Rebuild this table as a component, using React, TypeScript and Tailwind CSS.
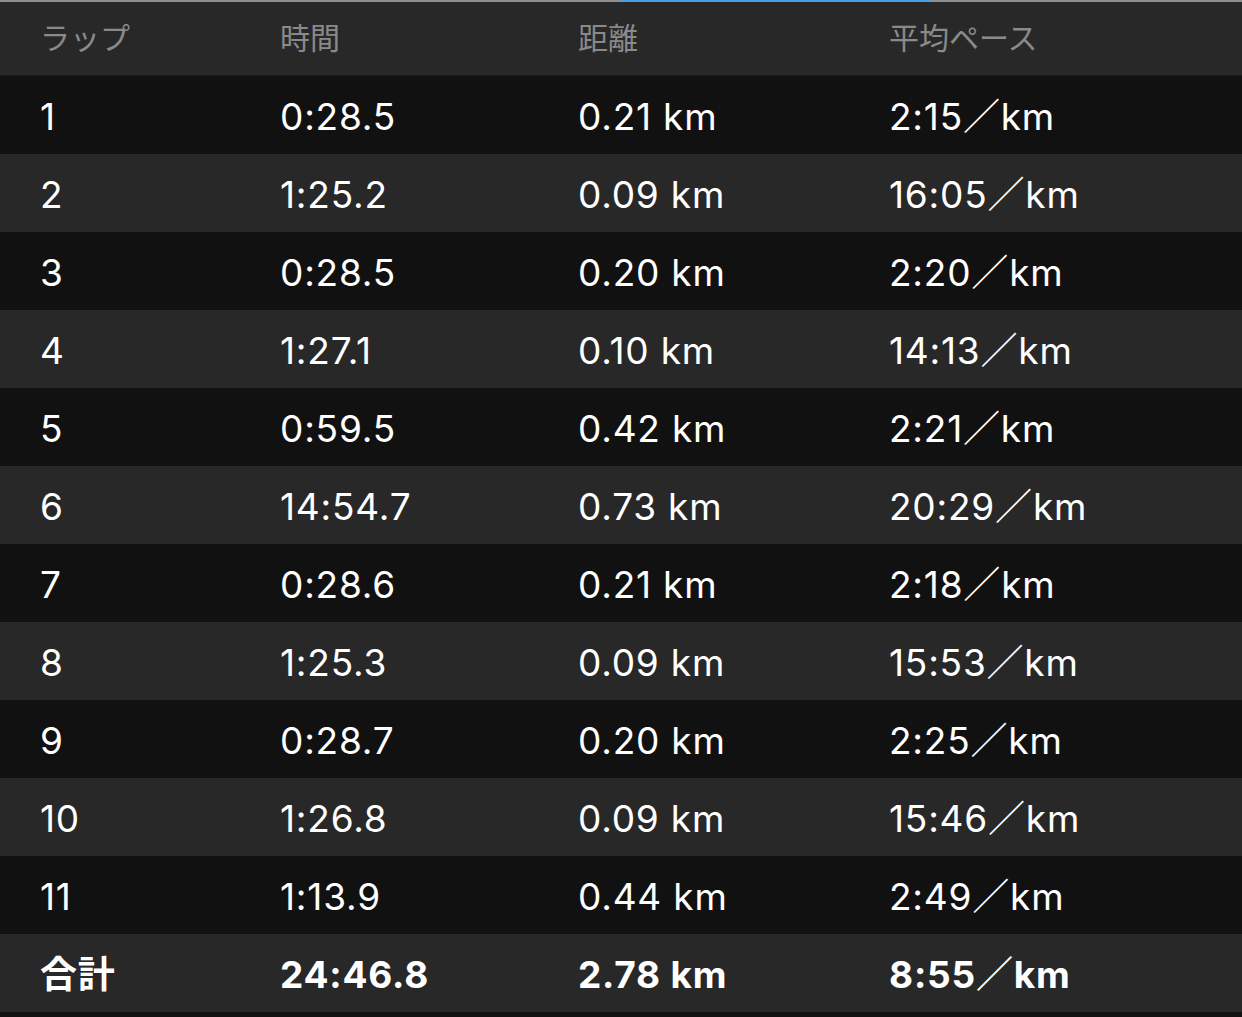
const laps = [
  ["1", "0:28.5", "0.21 km", "2:15／km"],
  ["2", "1:25.2", "0.09 km", "16:05／km"],
  ["3", "0:28.5", "0.20 km", "2:20／km"],
  ["4", "1:27.1", "0.10 km", "14:13／km"],
  ["5", "0:59.5", "0.42 km", "2:21／km"],
  ["6", "14:54.7", "0.73 km", "20:29／km"],
  ["7", "0:28.6", "0.21 km", "2:18／km"],
  ["8", "1:25.3", "0.09 km", "15:53／km"],
  ["9", "0:28.7", "0.20 km", "2:25／km"],
  ["10", "1:26.8", "0.09 km", "15:46／km"],
  ["11", "1:13.9", "0.44 km", "2:49／km"],
];

const font = "font-['Inter','Noto_Sans_CJK_JP',sans-serif]";

function Row({ cells, dark, bold }: { cells: string[]; dark: boolean; bold?: boolean }) {
  return (
    <div
      className={`flex h-[78px] items-center pt-[4px] text-[37px] tracking-[0.8px] text-white ${
        bold ? "font-bold" : "font-normal"
      } ${dark ? "bg-[#111111]" : "bg-[#282828]"}`}
    >
      <div className="w-[280px] pl-[40px]">{cells[0]}</div>
      <div className="w-[298px]">{cells[1]}</div>
      <div className="w-[311px]">{cells[2]}</div>
      <div className="flex-1">{cells[3]}</div>
    </div>
  );
}

export default function App() {
  return (
    <div className={`w-[1242px] h-[1017px] bg-[#111111] ${font} overflow-hidden`}>
      <div className="flex h-[2px] bg-[#8e8e8e]">
        <div className="w-[621px]" />
        <div className="w-[310px] bg-[#4a9fe2]" />
      </div>
      <div className="flex h-[74px] items-center bg-[#282828] text-[30px] text-[#8a8a8a] border-b border-[#1c1c1c]">
        <div className="w-[280px] pl-[40px]">ラップ</div>
        <div className="w-[298px]">時間</div>
        <div className="w-[311px]">距離</div>
        <div className="flex-1">平均ペース</div>
      </div>
      {laps.map((l, i) => (
        <Row key={l[0]} cells={l} dark={i % 2 === 0} />
      ))}
      <Row cells={["合計", "24:46.8", "2.78 km", "8:55／km"]} dark={false} bold />
    </div>
  );
}
